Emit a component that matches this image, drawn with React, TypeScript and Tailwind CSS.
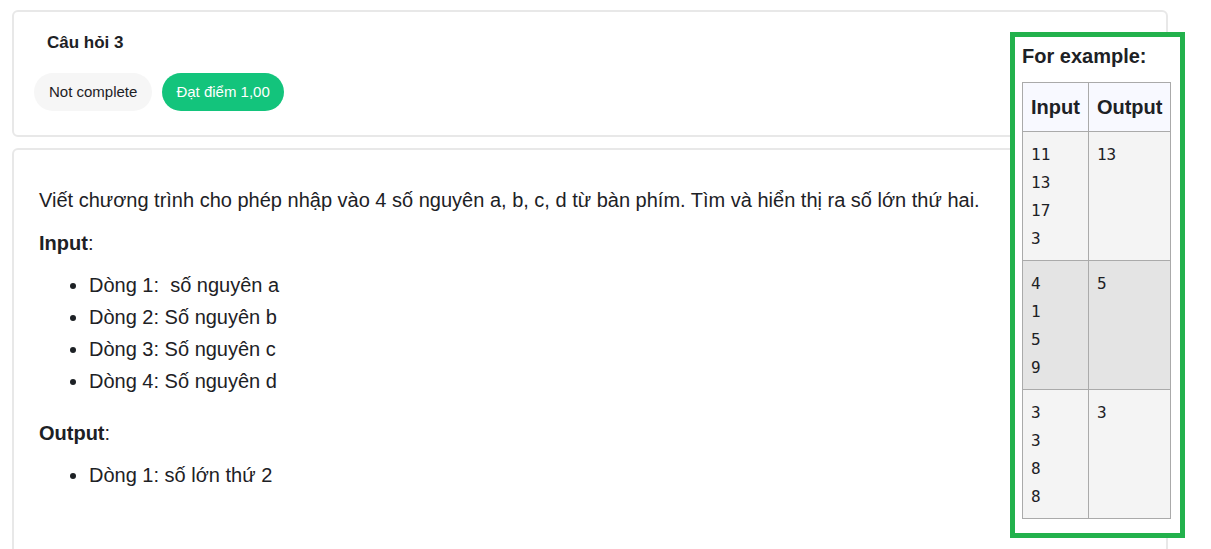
import React from 'react';

const rows = [
  { input: ['11', '13', '17', '3'], output: '13', bg: 'bg-[#f4f4f4]' },
  { input: ['4', '1', '5', '9'], output: '5', bg: 'bg-[#e4e4e4]' },
  { input: ['3', '3', '8', '8'], output: '3', bg: 'bg-[#f4f4f4]' },
];

const ExampleBox: React.FC = () => (
  <div className="absolute left-[1010px] top-[32px] w-[175px] h-[506px] border-[5px] border-[#22b14c] bg-white px-[7px] pt-[8px]">
    <div className="text-[20px] leading-[22px] font-bold text-[#1d2125]">For example:</div>
    <table className="mt-[15px] w-[148px] border-collapse border border-[#aaaaaa] text-[#1d2125]">
      <thead>
        <tr className="bg-[#f8f9ff]">
          <th className="w-[65px] h-[49px] border border-[#aaaaaa] px-[8px] text-left text-[20px] font-bold">Input</th>
          <th className="h-[49px] border border-[#aaaaaa] px-[8px] text-left text-[20px] font-bold">Output</th>
        </tr>
      </thead>
      <tbody className="font-['DejaVu_Sans_Mono',monospace] text-[16px] leading-[28px]">
        {rows.map((r, i) => (
          <tr key={i} className={r.bg}>
            <td className="border border-[#aaaaaa] px-[8px] pt-[9px] pb-[7px] align-top">
              {r.input.map((v, j) => (
                <div key={j}>{v}</div>
              ))}
            </td>
            <td className="border border-[#aaaaaa] px-[8px] pt-[9px] pb-[7px] align-top">{r.output}</td>
          </tr>
        ))}
      </tbody>
    </table>
  </div>
);

export default function App() {
  return (
    <div className="relative h-[549px] overflow-hidden bg-white font-['Liberation_Sans',Arial,sans-serif] text-[#1d2125]">
      <div className="pl-[12px] pt-[10px] w-[1168px]">
        <div className="rounded-[6px] border-2 border-[#e8e8e8] pt-[19px] pb-[24px] px-[20px]">
          <div className="pl-[13px] text-[17px] leading-[24px] font-bold">Câu hỏi 3</div>
          <div className="mt-[18px] flex gap-[10px]">
            <span className="h-[38px] flex items-center rounded-full bg-[#f6f6f6] px-[15px] text-[15px]">Not complete</span>
            <span className="h-[38px] flex items-center rounded-full bg-[#13c47c] px-[14px] text-[15px] text-white">Đạt điểm 1,00</span>
          </div>
        </div>
        <div className="mt-[11px] h-[420px] rounded-t-[6px] border-2 border-b-0 border-[#e8e8e8] pl-[25px] pt-[37px] text-[20px]">
          <p className="leading-[26px]">Viết chương trình cho phép nhập vào 4 số nguyên a, b, c, d từ bàn phím. Tìm và hiển thị ra số lớn thứ hai.</p>
          <p className="mt-[17px] leading-[26px]"><b>Input</b>:</p>
          <ul className="mt-[13px] list-disc pl-[50px] leading-[32px]">
            <li>Dòng 1:&nbsp; số nguyên a</li>
            <li>Dòng 2: Số nguyên b</li>
            <li>Dòng 3: Số nguyên c</li>
            <li>Dòng 4: Số nguyên d</li>
          </ul>
          <p className="mt-[23px] leading-[26px]"><b>Output</b>:</p>
          <ul className="mt-[13px] list-disc pl-[50px] leading-[32px]">
            <li>Dòng 1: số lớn thứ 2</li>
          </ul>
        </div>
      </div>
      <ExampleBox />
    </div>
  );
}
